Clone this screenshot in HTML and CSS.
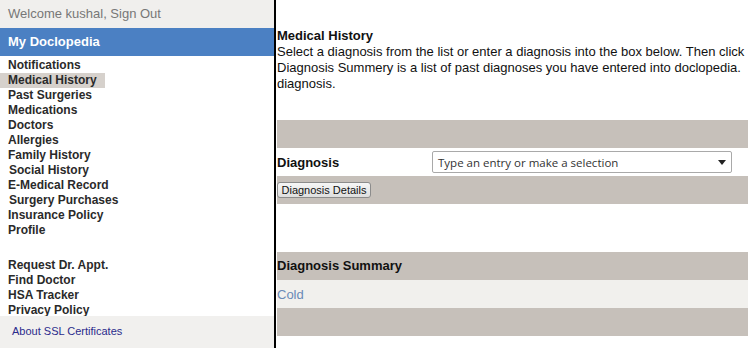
FILE: index.html
```html
<!DOCTYPE html>
<html lang="en">
<head>
  <meta charset="UTF-8">
  <title>My Doclopedia - Medical History</title>
  <link rel="stylesheet" href="styles.css">
</head>
<body>
  <div class="sidebar">
    <div class="welcome">Welcome kushal, Sign Out</div>
    <div class="brand">My Doclopedia</div>

    <ul class="nav">
      <li><a href="#">Notifications</a></li>
      <li><a href="#" class="active">Medical History</a></li>
      <li><a href="#">Past Surgeries</a></li>
      <li><a href="#">Medications</a></li>
      <li><a href="#">Doctors</a></li>
      <li><a href="#">Allergies</a></li>
      <li><a href="#">Family History</a></li>
      <li><a href="#" class="nudge">Social History</a></li>
      <li><a href="#">E-Medical Record</a></li>
      <li><a href="#" class="nudge">Surgery Purchases</a></li>
      <li><a href="#">Insurance Policy</a></li>
      <li><a href="#">Profile</a></li>
    </ul>

    <ul class="nav nav-extra">
      <li><a href="#">Request Dr. Appt.</a></li>
      <li><a href="#">Find Doctor</a></li>
      <li><a href="#">HSA Tracker</a></li>
      <li><a href="#">Privacy Policy</a></li>
    </ul>

    <div class="footer">
      <a href="#">About SSL Certificates</a>
    </div>
  </div>

  <div class="main">
    <div class="page-title">Medical History</div>
    <p class="intro">
      Select a diagnosis from the list or enter a diagnosis into the box below. Then click<br>
      Diagnosis Summery is a list of past diagnoses you have entered into doclopedia.<br>
      diagnosis.
    </p>

    <div class="band"></div>
    <div class="row diagnosis-row">
      <span class="label">Diagnosis</span>
      <div class="combo">
        <span class="combo-text">Type an entry or make a selection</span>
        <svg class="combo-arrow" width="8" height="5" viewBox="0 0 8 5"><path d="M0 0h8L4 5z" fill="#222"/></svg>
      </div>
    </div>
    <div class="band band-button">
      <button class="details-btn">Diagnosis Details</button>
    </div>

    <div class="spacer"></div>

    <div class="band band-header">Diagnosis Summary</div>
    <div class="row summary-row"><a href="#">Cold</a></div>
    <div class="band"></div>
  </div>
</body>
</html>
```

FILE: styles.css
```css
html, body {
  margin: 0;
  height: 100%;
}

body {
  font-family: 'Liberation Sans', Arial, sans-serif;
  display: flex;
  overflow: hidden;
  background-color: white;
}

a {
  text-decoration: none;
}

/* sidebar */
.sidebar {
  width: 274px;
  flex-shrink: 0;
  border-right: 2px solid #000;
  display: flex;
  flex-direction: column;
}

.welcome {
  height: 28px;
  line-height: 28px;
  padding-left: 8px;
  background-color: #f0efed;
  color: #777;
  font-size: 13px;
}

.brand {
  height: 28px;
  line-height: 28px;
  padding-left: 8px;
  background-color: #4b80c3;
  color: white;
  font-size: 13px;
  font-weight: bold;
}

.nav {
  list-style: none;
  margin: 0;
  padding: 0;
}

.nav li {
  line-height: 15px;
  height: 15px;
}

.nav a {
  display: inline-block;
  padding: 0 8px;
  font-size: 12px;
  font-weight: bold;
  color: #2a2a2a;
}

.nav a.nudge {
  padding-left: 9px;
}

.nav a.active {
  background-color: #d6d1cc;
}

.nav-extra {
  margin-top: 20px;
}

.footer {
  flex: 1;
  background-color: #f1f0ee;
  padding: 5px 0 0 12px;
}

.footer a {
  font-size: 11px;
  color: #2b2b8c;
}

/* main */
.main {
  flex: 1;
  min-width: 0;
  padding: 28px 0 0 1px;
  color: #111;
}

.page-title {
  font-size: 13px;
  font-weight: bold;
  line-height: 16px;
}

.intro {
  margin: 0 0 28px;
  font-size: 13px;
  line-height: 16px;
  white-space: nowrap;
}

.band {
  height: 28px;
  background-color: #c6c0ba;
}

.row {
  height: 28px;
  display: flex;
  align-items: center;
}

.diagnosis-row {
  display: grid;
  grid-template-columns: 155px 300px;
  align-items: center;
}

.label {
  font-size: 13px;
  font-weight: bold;
}

.combo {
  height: 20px;
  border: 1px solid #a9a9a9;
  border-radius: 2px;
  background-color: white;
  display: flex;
  align-items: center;
  justify-content: space-between;
  padding: 0 5px 0 5px;
}

.combo-text {
  font-family: 'Open Sans', 'Noto Sans', sans-serif;
  font-size: 11.5px;
  color: #333;
}

.band-button {
  display: flex;
  align-items: center;
}

.details-btn {
  height: 16px;
  width: 94px;
  padding: 0;
  font-family: 'Liberation Sans', Arial, sans-serif;
  font-size: 11px;
  color: #111;
  border: 1px solid #8c8c8c;
  border-radius: 3px;
  background: linear-gradient(#f6f6f6, #dedede);
}

.spacer {
  height: 48px;
}

.band-header {
  line-height: 28px;
  font-size: 13px;
  font-weight: bold;
}

.summary-row {
  background-color: #f1f0ed;
}

.summary-row a {
  font-size: 13px;
  color: #6a8ab7;
}
```
